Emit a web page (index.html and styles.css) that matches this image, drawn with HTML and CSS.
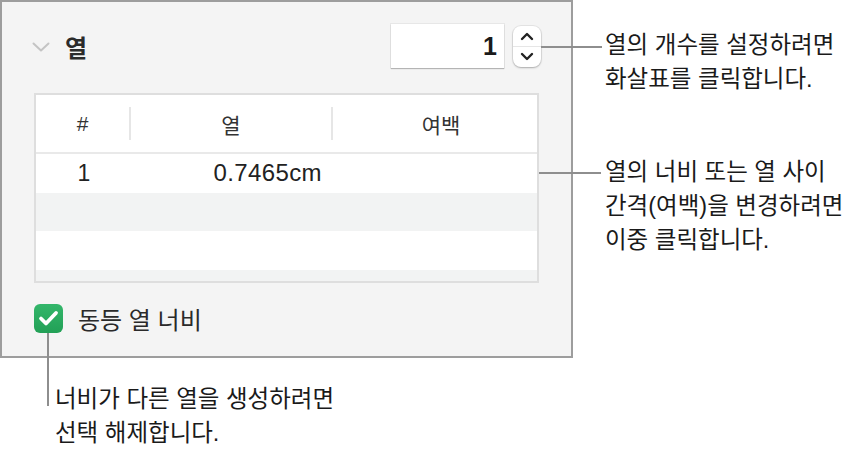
FILE: index.html
```html
<!DOCTYPE html>
<html lang="ko">
<head>
    <meta charset="UTF-8">
    <meta name="viewport" content="width=device-width, initial-scale=1.0">
    <title>열</title>
    <link rel="stylesheet" href="styles.css">
</head>
<body>
    <div class="page">
        <div class="left">
            <div class="panel">
                <div class="panel-head">
                    <div class="title">
                        <svg class="chevron" width="18" height="10" viewBox="0 0 18 10">
                            <path d="M1.5 1.5 L9 8.5 L16.5 1.5" fill="none" stroke="#c4c4c4" stroke-width="2" stroke-linecap="round" stroke-linejoin="round"/>
                        </svg>
                        <span>열</span>
                    </div>
                    <div class="stepper">
                        <div class="num">1</div>
                        <div class="arrows">
                            <div class="arrow up">
                                <svg width="14" height="9" viewBox="0 0 14 9"><path d="M2 7 L7 2 L12 7" fill="none" stroke="#222" stroke-width="2.4" stroke-linecap="round" stroke-linejoin="round"/></svg>
                            </div>
                            <div class="arrow down">
                                <svg width="14" height="9" viewBox="0 0 14 9"><path d="M2 2 L7 7 L12 2" fill="none" stroke="#222" stroke-width="2.4" stroke-linecap="round" stroke-linejoin="round"/></svg>
                            </div>
                        </div>
                    </div>
                </div>

                <div class="cols">
                    <div class="cols-head">
                        <div class="cell c1">#</div>
                        <div class="divider"></div>
                        <div class="cell c2">열</div>
                        <div class="divider"></div>
                        <div class="cell c3">여백</div>
                    </div>
                    <div class="row">
                        <div class="cell c1">1</div>
                        <div class="cell c2 val">0.7465cm</div>
                        <div class="cell c3"></div>
                    </div>
                    <div class="row alt"></div>
                    <div class="row"></div>
                    <div class="row alt"></div>
                </div>

                <div class="check-row">
                    <span class="check">
                        <svg width="21" height="17" viewBox="0 0 21 17"><path d="M3 8.5 L8 13.5 L18 3" fill="none" stroke="#fff" stroke-width="3.8" stroke-linecap="round" stroke-linejoin="round"/></svg>
                    </span>
                    <span>동등 열 너비</span>
                </div>
            </div>
            <p class="note note-bottom">너비가 다른 열을 생성하려면<br>선택 해제합니다.</p>
        </div>

        <div class="right">
            <p class="note note-1">열의 개수를 설정하려면<br>화살표를 클릭합니다.</p>
            <p class="note note-2">열의 너비 또는 열 사이<br>간격(여백)을 변경하려면<br>이중 클릭합니다.</p>
        </div>
    </div>
</body>
</html>
```

FILE: styles.css
```css
body {
    margin: 0;
    background: #fff;
    font-family: "Liberation Sans", "Noto Sans CJK KR", sans-serif;
    color: #1c1c1c;
}

.page {
    display: flex;
    width: 859px;
    height: 458px;
}

.left {
    width: 573px;
    flex: none;
}

.panel {
    box-sizing: border-box;
    width: 573px;
    height: 358px;
    background: #f4f4f4;
    border: 2px solid #9d9d9d;
    padding: 22px 32px 0 32px;
}

.panel-head {
    display: flex;
    justify-content: space-between;
    align-items: center;
    height: 44px;
}

.title {
    display: flex;
    align-items: center;
    gap: 15px;
    margin-left: -2px;
    font-size: 24px;
    font-weight: bold;
    color: #2b2b2b;
}

.chevron {
    margin-top: 2px;
}

.stepper {
    display: flex;
    align-items: center;
    gap: 9px;
    margin-right: -2px;
}

.num {
    box-sizing: border-box;
    width: 113px;
    height: 44px;
    background: #fff;
    box-shadow: 0 1px 1px rgba(0, 0, 0, 0.22), 0 0 0 1px rgba(0, 0, 0, 0.05);
    text-align: right;
    padding-right: 7px;
    font-size: 25px;
    font-weight: bold;
    line-height: 44px;
    color: #1a1a1a;
}

.arrows {
    width: 28px;
    height: 41px;
    border-radius: 8px;
    background: #fff;
    box-shadow: 0 1px 2px rgba(0, 0, 0, 0.25), 0 0 0 1px rgba(0, 0, 0, 0.06);
    display: flex;
    flex-direction: column;
}

.arrow {
    flex: 1;
    display: flex;
    justify-content: center;
    align-items: center;
}

.arrow.up {
    border-bottom: 1px solid #e6e6e6;
    padding-top: 1px;
}

.cols {
    box-sizing: border-box;
    margin-top: 25px;
    height: 190px;
    background: #fff;
    border: 2px solid #dedede;
    overflow: hidden;
}

.cols-head {
    display: flex;
    align-items: center;
    height: 57px;
    border-bottom: 2px solid #e9e9e9;
    font-size: 21px;
    color: #333;
}

.divider {
    width: 2px;
    height: 33px;
    background: #e6e6e6;
}

.cell {
    text-align: center;
}

.c1 {
    width: 93px;
}

.c2 {
    width: 200px;
}

.c3 {
    flex: 1;
}

.cols-head .c3 {
    padding-left: 12px;
}

.row {
    display: flex;
    align-items: center;
    height: 38.5px;
    font-size: 23px;
    color: #222;
}

.row .c1 {
    padding-left: 3px;
    box-sizing: border-box;
}

.row .c2 {
    width: 202px;
}

.row .val {
    text-align: right;
    padding-right: 9px;
    box-sizing: border-box;
    font-size: 24px;
    letter-spacing: 0.4px;
}

.row.alt {
    background: #f2f3f3;
}

.check-row {
    display: flex;
    align-items: center;
    gap: 15px;
    margin-top: 18px;
    font-size: 24px;
    color: #2a2a2a;
}

.check {
    position: relative;
    width: 29px;
    height: 29px;
    border-radius: 6px;
    background: linear-gradient(#33b66a, #22a056);
    display: flex;
    justify-content: center;
    align-items: center;
}

.check::after {
    content: "";
    position: absolute;
    left: 13px;
    top: 29px;
    width: 2px;
    height: 73px;
    background: #8e8e8e;
}

.note {
    margin: 0;
    font-size: 23.5px;
    line-height: 34px;
    color: #1a1a1a;
    position: relative;
}

.note-bottom {
    margin: 24px 0 0 55px;
}

.right {
    padding-left: 32px;
}

.note-1 {
    margin-top: 28px;
}

.note-1::before {
    content: "";
    position: absolute;
    left: -64px;
    top: 18px;
    width: 61px;
    height: 2px;
    background: #8e8e8e;
}

.note-2 {
    margin-top: 59px;
}

.note-2::before {
    content: "";
    position: absolute;
    left: -66px;
    top: 17px;
    width: 62px;
    height: 2px;
    background: #8e8e8e;
}
```
